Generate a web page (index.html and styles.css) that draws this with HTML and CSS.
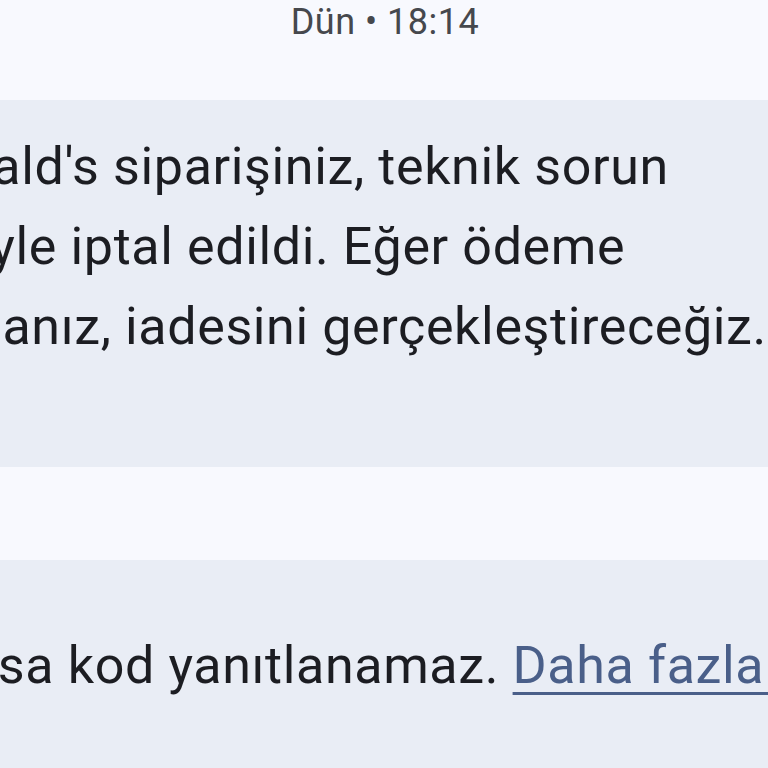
FILE: index.html
```html
<!DOCTYPE html>
<html lang="tr">
<head>
<meta charset="utf-8">
<link rel="stylesheet" href="styles.css">
</head>
<body>
<div class="screen">
  <div class="stamp">Dün • 18:14</div>
  <div class="bubble first">
    <p class="msg"><span class="ln l1">McDonald's siparişiniz, teknik sorun</span><span class="ln l2">nedeniyle iptal edildi. Eğer ödeme</span><span class="ln l3">yaptıysanız, iadesini gerçekleştireceğiz.</span></p>
  </div>
  <div class="bubble second">
    <p class="msg"><span class="ln l4">Kısa kod yanıtlanamaz. <a class="more" href="#">Daha fazla bilgi</a></span></p>
  </div>
</div>
</body>
</html>
```
FILE: styles.css
```css
html, body {
  margin: 0;
  padding: 0;
  background: #f8f9fe;
}
.screen {
  width: 768px;
  height: 768px;
  overflow: hidden;
  font-family: Roboto, "Noto Sans", sans-serif;
  display: flex;
  flex-direction: column;
}
.stamp {
  height: 100px;
  flex: none;
  text-align: center;
  font-size: 36px;
  line-height: 44px;
  letter-spacing: 0.5px;
  color: #46484d;
  padding-left: 2px;
}
.bubble {
  flex: none;
  background: #e9edf5;
  overflow: hidden;
}
.first {
  height: 367px;
}
.second {
  margin-top: 93px;
  height: 300px;
}
.msg {
  margin: 0;
  font-size: 52px;
  letter-spacing: 0.63px;
  color: #1c1d22;
  white-space: nowrap;
}
.first .msg {
  padding-top: 27px;
  line-height: 80px;
}
.second .msg {
  padding-top: 76px;
  line-height: 60px;
}
.ln {
  display: block;
}
.l1 { margin-left: -176px; }
.l2 { margin-left: -168px; }
.l3 { margin-left: -165px; }
.l4 { margin-left: -49px; }
.more {
  color: #4a5f89;
  text-decoration: underline;
  text-decoration-thickness: 3px;
  text-underline-offset: 9px;
}
```
